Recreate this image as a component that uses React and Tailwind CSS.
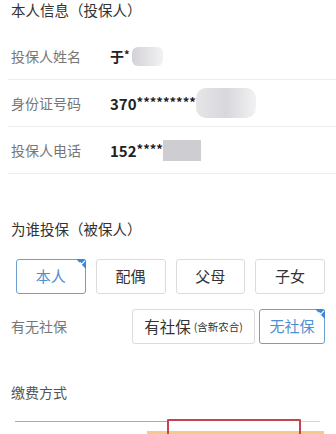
import React from "react";

const font = { fontFamily: '"Noto Sans CJK SC", "Noto Sans", sans-serif' };

const Corner = () => (
  <span className="absolute -top-px -right-px w-[12px] h-[12px] overflow-hidden rounded-tr-[3px]">
    <svg width="12" height="12" viewBox="0 0 12 12" className="block">
      <path d="M2 0 H12 V10 Z" fill="#3d87d6" />
      <path d="M6.2 3.6 L7.8 5.2 L10.6 2.2" stroke="#fff" strokeWidth="1.2" fill="none" strokeLinecap="round" />
    </svg>
  </span>
);

const Row = ({ label, children }) => (
  <div className="flex items-center h-[47px] border-b border-[#ededed] -mx-[3px] px-[3px]">
    <span className="w-[99px] text-[14px] text-[#777]">{label}</span>
    <div className="flex items-center text-[15px] font-bold text-[#222] leading-none">{children}</div>
  </div>
);

const Choice = ({ active, className = "", children }) => (
  <div
    className={
      "relative h-[35px] flex items-center justify-center border rounded-[3px] text-[15px] " +
      (active ? "border-[#6d9fcf] text-[#4f8fd0]" : "border-[#dcdcdc] text-[#333]") +
      " " +
      className
    }
  >
    {children}
    {active && <Corner />}
  </div>
);

export default function App() {
  return (
    <div className="w-[336px] h-[434px] overflow-hidden bg-white relative" style={font}>
      <div className="pl-[11px] pr-0">
        <div className="pt-px text-[14.5px] leading-[17px] text-[#333]">本人信息（投保人）</div>
        <div className="h-[15px]" />
        <Row label="投保人姓名">
          <span className="text-[14px]">于</span>
          <span className="text-[11px] -mt-[3px]">*</span>
          <span className="ml-[2px] w-[31px] h-[19px] rounded-[6px] bg-gradient-to-r from-[#d2d2d7] via-[#e2e2e6] to-[#f2f2f4]" />
        </Row>
        <Row label="身份证号码">
          <span>370</span>
          <span className="text-[13px] -mt-[3px]">*********</span>
          <span className="w-[60px] h-[30px] rounded-[10px] bg-gradient-to-r from-[#e6e6e9] via-[#d8d8dc] to-[#f2f2f4]" />
        </Row>
        <Row label="投保人电话">
          <span>152</span>
          <span className="text-[13px] -mt-[3px]">****</span>
          <span className="w-[38px] h-[21px] bg-[#cdcdd2]" />
        </Row>

        <div className="pt-[46px] text-[14.5px] leading-[17px] text-[#333]">为谁投保（被保人）</div>

        <div className="mt-[22px] pl-[5px] pr-[11px] grid grid-cols-4 gap-[10px]">
          <Choice active>本人</Choice>
          <Choice>配偶</Choice>
          <Choice>父母</Choice>
          <Choice>子女</Choice>
        </div>

        <div className="mt-[15px] pr-[11px] flex items-center">
          <span className="flex-1 text-[14px] text-[#777]">有无社保</span>
          <Choice className="w-[123px] text-[#222]">
            <span className="text-[15.5px]">有社保</span>
            <span className="text-[10.5px] ml-[3px]">(含新农合)</span>
          </Choice>
          <Choice active className="w-[66px] ml-[4px]">无社保</Choice>
        </div>

        <div className="mt-[40px] text-[14px] leading-[17px] text-[#555]">缴费方式</div>
      </div>

      <div className="absolute left-0 right-0 top-[419px] h-[15px]">
        <div className="absolute left-[15px] w-[152px] top-[2px] h-px bg-[#94b2c4]" />
        <div className="absolute left-[300px] w-[20px] top-[2px] h-px bg-[#d4d4d4]" />
        <div className="absolute left-[147px] w-[177px] top-[12px] h-[3px] bg-[#f3c98c]" />
        <div className="absolute left-[167px] w-[134px] top-0 h-[20px] border-2 border-[#c4434c] rounded-[1px]" />
      </div>
    </div>
  );
}
